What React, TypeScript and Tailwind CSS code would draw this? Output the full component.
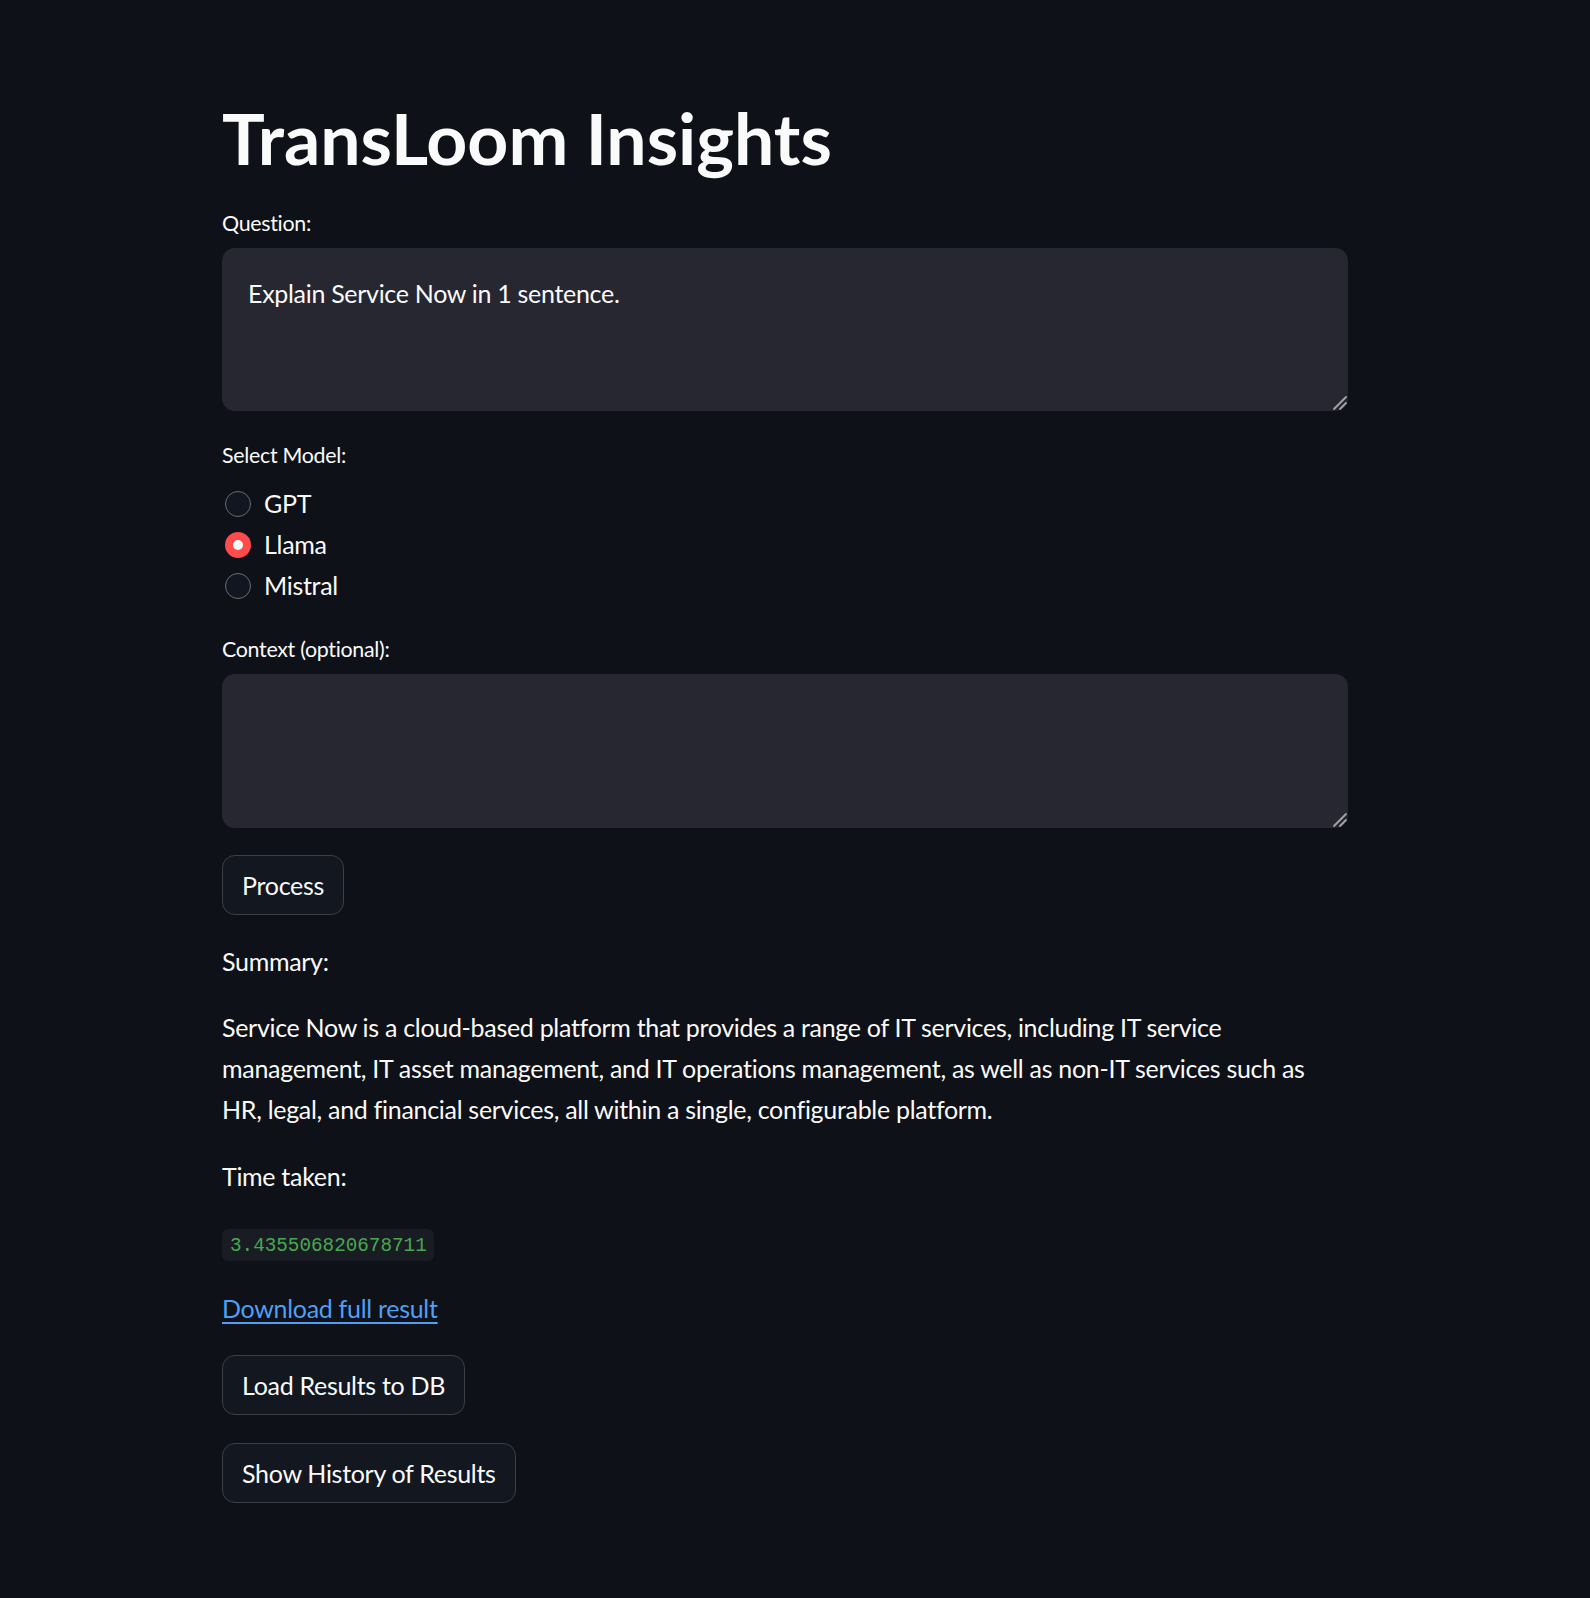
import { useState } from "react";

const font = { fontFamily: "Lato, 'Noto Sans', sans-serif" };

const models = ["GPT", "Llama", "Mistral"];

const Button = ({ label }: { label: string }) => (
  <button className="h-[60px] px-[19px] rounded-[12.8px] border border-[#3d3f45] bg-[#131720] text-[25px] tracking-[-0.3px] text-[#fafafa] self-start leading-none">
    {label}
  </button>
);

// textarea with the little diagonal grip drawn in the corner
const TextBox = ({ height, value }: { height: string; value?: string }) => (
  <div className="relative mt-[9px]">
    <textarea
      className={`${height} block w-full rounded-[12.8px] bg-[#262730] px-[26px] py-[25px] text-[25px] tracking-[-0.3px] leading-[41px] text-[#fafafa] outline-none resize-none`}
      defaultValue={value}
    />
    <svg className="absolute right-0 bottom-0 pointer-events-none" width="16" height="16" viewBox="0 0 16 16">
      <path d="M2 14 L14 2 M8 14 L14 8" stroke="#a3a4a8" strokeWidth="1.8" strokeLinecap="round" />
    </svg>
  </div>
);

const App = () => {
  const [model, setModel] = useState("Llama");

  return (
    <div className="min-h-screen bg-[#0e1117] text-[#fafafa]" style={font}>
      <div className="ml-[222px] w-[1126px] pt-[96px] pb-[94px] flex flex-col">
        <h1 className="h-[84px] flex items-center text-[71.5px] font-bold leading-none">
          TransLoom Insights
        </h1>

        <label className="mt-[27px] h-[32px] flex items-center text-[21.4px] tracking-[-0.3px]">Question:</label>
        <TextBox height="h-[163px]" value="Explain Service Now in 1 sentence." />

        <label className="mt-[28px] h-[32px] flex items-center text-[21.4px] tracking-[-0.3px]">Select Model:</label>
        <div className="mt-[12px] flex flex-col">
          {models.map((m) => (
            <button
              key={m}
              onClick={() => setModel(m)}
              className="h-[41px] flex items-center gap-[13px] text-[25px] tracking-[-0.3px]"
            >
              {model === m ? (
                <span className="ml-[3px] w-[26px] h-[26px] rounded-full bg-[#ff4b4b] flex items-center justify-center">
                  <span className="w-[10px] h-[10px] rounded-full bg-[#fafafa]" />
                </span>
              ) : (
                <span className="ml-[3px] w-[26px] h-[26px] rounded-full border-[1.6px] border-[#6a6c71] bg-[#121620]" />
              )}
              <span>{m}</span>
            </button>
          ))}
        </div>

        <label className="mt-[27px] h-[32px] flex items-center text-[21.4px] tracking-[-0.3px]">Context (optional):</label>
        <TextBox height="h-[154px]" />

        <div className="mt-[27px] flex">
          <Button label="Process" />
        </div>

        <p className="mt-[26px] text-[25px] tracking-[-0.3px] leading-[41px]">Summary:</p>
        <p className="mt-[25px] text-[25px] tracking-[-0.3px] leading-[41px] whitespace-nowrap">
          Service Now is a cloud-based platform that provides a range of IT services, including IT service
          <br />
          management, IT asset management, and IT operations management, as well as non-IT services such as
          <br />
          HR, legal, and financial services, all within a single, configurable platform.
        </p>

        <p className="mt-[26px] text-[25px] tracking-[-0.3px] leading-[41px]">Time taken:</p>
        <div className="mt-[32px] flex">
          <code
            className="h-[32px] pl-[8px] pr-[7px] pt-[2px] flex items-center rounded-[6px] bg-[#1a1c24] text-[19.3px] text-[#47a84f]"
            style={{ fontFamily: "'Liberation Mono', 'DejaVu Sans Mono', monospace" }}
          >
            3.435506820678711
          </code>
        </div>

        <div className="mt-[27px] h-[41px] flex items-center">
          <a href="#" className="text-[25px] tracking-[-0.3px] text-[#4f9ff5] underline underline-offset-[4px]">
            Download full result
          </a>
        </div>

        <div className="mt-[26px] flex">
          <Button label="Load Results to DB" />
        </div>
        <div className="mt-[28px] flex">
          <Button label="Show History of Results" />
        </div>
      </div>
    </div>
  );
};

export default App;
